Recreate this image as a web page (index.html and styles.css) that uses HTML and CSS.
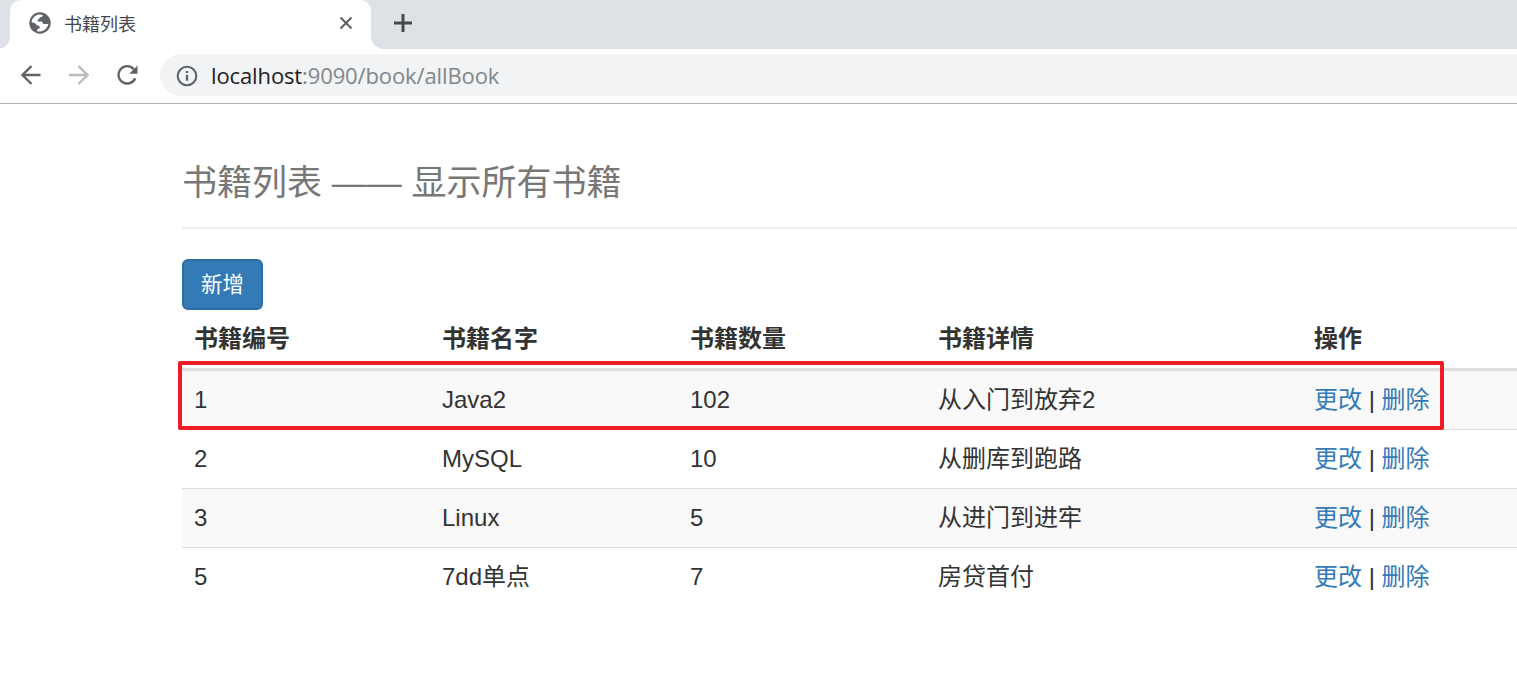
FILE: index.html
```html
<!DOCTYPE html>
<html lang="zh-CN">
<head>
<meta charset="utf-8">
<title>书籍列表</title>
<link rel="stylesheet" href="styles.css">
</head>
<body>
<div class="tab-strip">
  <div class="tab">
    <svg class="tab-icon" viewBox="0 0 22 22"><circle cx="11" cy="11" r="10.700" fill="#5f6368"/><path d="M2.600 10.300C2.900 6 6.200 2.900 10.500 2.500L13.800 3.100C13.800 5 12.500 5.200 11.200 5.300 10.500 5.400 10.500 7.200 9.300 7.400 8.200 7.600 8.300 9.400 9.200 9.500H12.400C13.600 9.600 13.600 11.800 14.600 12H19.300C18.700 16 15.200 19.300 11 19.500H8.200V17.600C8.300 16.500 10.700 16.900 10.800 15.400 10.900 13.800 9.600 13.900 8.400 13.500 7 13 7 11.100 5.500 10.900Z" fill="#fff"/></svg>
    <span class="tab-title">书籍列表</span>
    <svg class="tab-close" viewBox="0 0 14 14"><path d="M1.500 1.500l11 11M12.500 1.500l-11 11" stroke="#5f6368" stroke-width="2.100" fill="none"/></svg>
  </div>
  <svg class="new-tab" viewBox="0 0 18 18"><path d="M9 0v18M0 9h18" stroke="#45484c" stroke-width="3" fill="none"/></svg>
</div>
<div class="toolbar">
  <svg class="nav" viewBox="0 0 20 20"><path d="M19.500 10H1.500M10.500 1 1.500 10l9 9" stroke="#5f6368" stroke-width="2.300" fill="none"/></svg>
  <svg class="nav" viewBox="0 0 20 20"><path d="M0 10h18.500M9.500 1l9 9-9 9" stroke="#bababc" stroke-width="2.300" fill="none"/></svg>
  <svg class="nav reload" viewBox="0 0 22 20"><path d="M16.800 4.200A8.700 8.700 0 1 0 18.200 13.200" stroke="#5f6368" stroke-width="2.400" fill="none"/><path d="M20.500.5v8.300h-8.300Z" fill="#5f6368"/></svg>
  <div class="omnibox">
    <svg class="info" viewBox="0 0 22 22"><circle cx="11" cy="11" r="9.300" fill="none" stroke="#5f6368" stroke-width="2.100"/><path d="M11 9.800v6M11 5.900v2.100" stroke="#5f6368" stroke-width="2.300"/></svg>
    <span class="url"><span class="host">localhost</span>:9090/book/allBook</span>
  </div>
</div>
<main class="page">
  <h1 class="page-header"><small>书籍列表 —— 显示所有书籍</small></h1>
  <a class="btn">新增</a>
  <div class="table-wrap">
    <table class="table">
      <colgroup><col class="narrow"><col class="narrow"><col class="narrow"><col class="wide"><col></colgroup>
      <thead><tr><th>书籍编号</th><th>书籍名字</th><th>书籍数量</th><th>书籍详情</th><th>操作</th></tr></thead>
      <tbody>
        <tr><td>1</td><td>Java2</td><td>102</td><td>从入门到放弃2</td><td><a>更改</a> | <a>删除</a></td></tr>
        <tr><td>2</td><td>MySQL</td><td>10</td><td>从删库到跑路</td><td><a>更改</a> | <a>删除</a></td></tr>
        <tr><td>3</td><td>Linux</td><td>5</td><td>从进门到进牢</td><td><a>更改</a> | <a>删除</a></td></tr>
        <tr><td>5</td><td>7dd单点</td><td>7</td><td>房贷首付</td><td><a>更改</a> | <a>删除</a></td></tr>
      </tbody>
    </table>
    <div class="highlight"></div>
  </div>
</main>
</body>
</html>
```
FILE: styles.css
```css
* { box-sizing: border-box; }
body {
  margin: 0;
  height: 683px;
  overflow: hidden;
  background: #fff;
  color: #333;
  font-family: "Liberation Sans", "Noto Sans CJK SC", sans-serif;
}
svg { display: block; flex: none; }
.tab-strip {
  display: flex;
  height: 49px;
  padding-left: 10px;
  background: #dee1e6;
}
.tab {
  position: relative;
  display: flex;
  align-items: center;
  width: 361px;
  height: 49px;
  padding: 0 18px 3px 19px;
  background: #fff;
  border-radius: 11px 11px 0 0;
}
.tab::before, .tab::after {
  content: "";
  position: absolute;
  bottom: 0;
  width: 12px;
  height: 12px;
}
.tab::before { left: -12px; background: radial-gradient(circle at 0 0, transparent 11.5px, #fff 12px); }
.tab::after { right: -12px; background: radial-gradient(circle at 100% 0, transparent 11.5px, #fff 12px); }
.tab-icon { width: 22px; height: 22px; }
.tab-title { margin: 3px auto 0 13px; font-size: 18px; line-height: 24px; color: #45484c; }
.tab-close { width: 14px; height: 14px; }
.new-tab { width: 18px; height: 18px; margin: 14px 0 0 23px; }
.toolbar {
  display: flex;
  align-items: center;
  gap: 28px;
  height: 55px;
  padding: 0 0 2px 21px;
  border-bottom: 1px solid #b1b1b2;
}
.nav { width: 20px; height: 20px; }
.reload { width: 22px; }
.omnibox {
  display: flex;
  align-items: center;
  flex: 1;
  height: 42px;
  margin-left: -7px;
  padding-left: 16px;
  background: #f1f3f4;
  border-radius: 21px 0 0 21px;
}
.info { width: 22px; height: 22px; margin-top: 1px; }
.url {
  margin-left: 13px;
  font: 22px/30px "Open Sans", "Noto Sans", sans-serif;
  letter-spacing: -0.12px;
  color: #80868b;
}
.host { color: #202124; }
.page { padding-left: 182px; }
.page-header {
  height: 125px;
  margin: 0 0 30px;
  padding-top: 60px;
  border-bottom: 2px solid #eee;
  font-size: 35px;
  line-height: 38px;
  font-weight: 400;
}
.page-header small { font-size: 35px; color: #777; }
.btn {
  display: flex;
  align-items: center;
  justify-content: center;
  width: 81px;
  height: 51px;
  padding-bottom: 4px;
  border: 2px solid #2e6da4;
  border-radius: 6px;
  background: #337ab7;
  color: #fff;
  font-size: 21.4px;
}
.table-wrap { position: relative; }
.table {
  width: 1400px;
  table-layout: fixed;
  border-spacing: 0;
  font-size: 24px;
  line-height: 34px;
}
.narrow { width: 248px; }
.wide { width: 376px; }
th, td { padding: 0 12px; text-align: left; white-space: nowrap; }
th { height: 61px; border-bottom: 3px solid #ddd; }
td { height: 59px; border-top: 1px solid #ddd; }
tbody tr:first-child td { height: 58px; border-top: 0; }
tbody tr:nth-child(odd) { background: #f9f9f9; }
td a { color: #337ab7; }
.highlight {
  position: absolute;
  left: -4px;
  top: 51px;
  width: 1266px;
  height: 69px;
  border: 4px solid #ee1c25;
  border-radius: 2px;
}
```
